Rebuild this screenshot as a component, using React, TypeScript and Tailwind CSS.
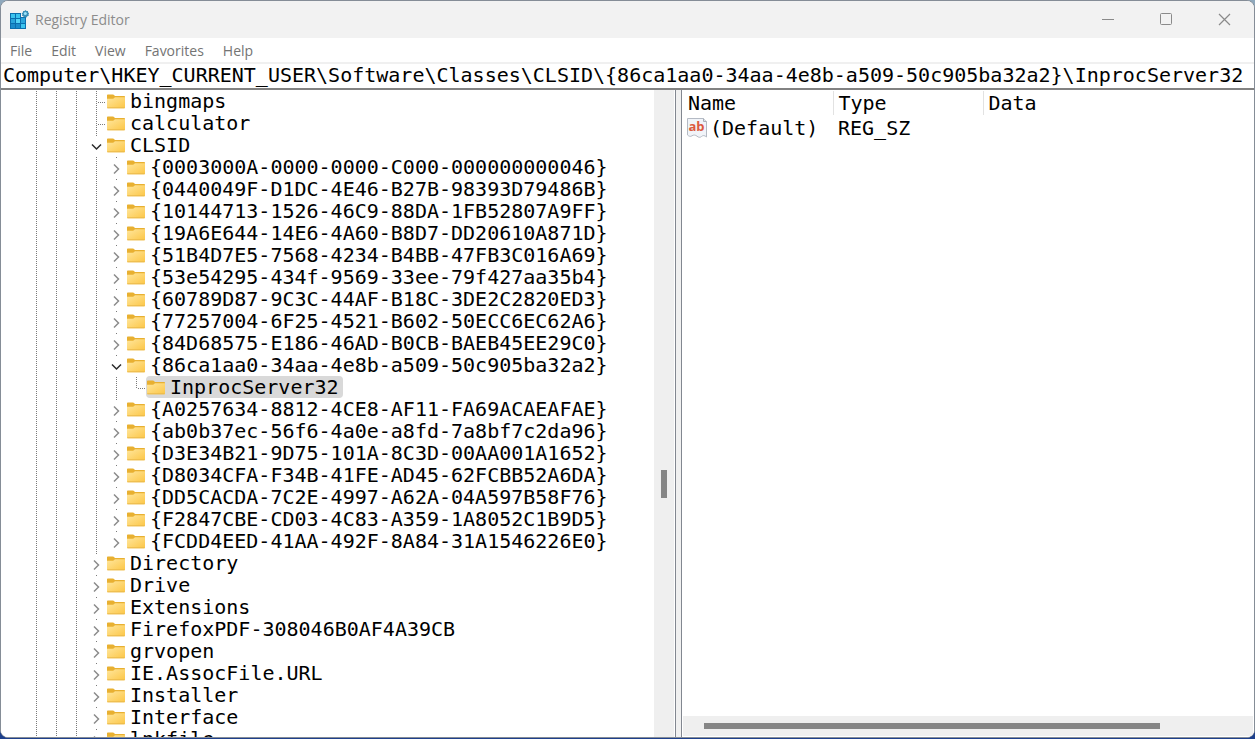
import { useState } from "react";

type Item = {
  name: string;
  depth: number;
  state: "leaf" | "closed" | "open";
  last?: boolean;
};

const clsid = (name: string): Item => ({ name, depth: 1, state: "closed" });
const top = (name: string): Item => ({ name, depth: 0, state: "closed" });

const items: Item[] = [
  { name: "bingmaps", depth: 0, state: "leaf" },
  { name: "calculator", depth: 0, state: "leaf" },
  { name: "CLSID", depth: 0, state: "open" },
  clsid("{0003000A-0000-0000-C000-000000000046}"),
  clsid("{0440049F-D1DC-4E46-B27B-98393D79486B}"),
  clsid("{10144713-1526-46C9-88DA-1FB52807A9FF}"),
  clsid("{19A6E644-14E6-4A60-B8D7-DD20610A871D}"),
  clsid("{51B4D7E5-7568-4234-B4BB-47FB3C016A69}"),
  clsid("{53e54295-434f-9569-33ee-79f427aa35b4}"),
  clsid("{60789D87-9C3C-44AF-B18C-3DE2C2820ED3}"),
  clsid("{77257004-6F25-4521-B602-50ECC6EC62A6}"),
  clsid("{84D68575-E186-46AD-B0CB-BAEB45EE29C0}"),
  { name: "{86ca1aa0-34aa-4e8b-a509-50c905ba32a2}", depth: 1, state: "open" },
  { name: "InprocServer32", depth: 2, state: "leaf", last: true },
  clsid("{A0257634-8812-4CE8-AF11-FA69ACAEAFAE}"),
  clsid("{ab0b37ec-56f6-4a0e-a8fd-7a8bf7c2da96}"),
  clsid("{D3E34B21-9D75-101A-8C3D-00AA001A1652}"),
  clsid("{D8034CFA-F34B-41FE-AD45-62FCBB52A6DA}"),
  clsid("{DD5CACDA-7C2E-4997-A62A-04A597B58F76}"),
  clsid("{F2847CBE-CD03-4C83-A359-1A8052C1B9D5}"),
  clsid("{FCDD4EED-41AA-492F-8A84-31A1546226E0}"),
  top("Directory"),
  top("Drive"),
  top("Extensions"),
  top("FirefoxPDF-308046B0AF4A39CB"),
  top("grvopen"),
  top("IE.AssocFile.URL"),
  top("Installer"),
  top("Interface"),
  top("lnkfile"),
];

const dotsDown = "w-px bg-[repeating-linear-gradient(180deg,transparent_0_1px,#7a7a7a_1px_2px)]";
const dotsAcross = "h-px bg-[repeating-linear-gradient(90deg,transparent_0_1px,#7a7a7a_1px_2px)]";

function RegistryIcon() {
  return (
    <svg width="20" height="20" viewBox="0 0 20 20" aria-hidden="true">
      <path d="M1 3h11v4h5v12H1z" fill="#0b6fae" />
      <path d="M2 4h4v4H2zM7 4h4v4H7z" fill="#3cc4ee" />
      <path d="M2 9h4v4H2z" fill="#2aa5dc" />
      <path d="M7 9h4v4H7z" fill="#53d3f5" />
      <path d="M12 8h4v5h-4z" fill="#2aa5dc" />
      <path d="M2 14h4v4H2zM7 14h4v4H7z" fill="#1b8ccb" />
      <path d="M12 14h4v4h-4z" fill="#3cc4ee" />
      <path
        d="M16.500 0l1 1.100 1.500-.2.1 1.500 1 .8-.6 1.200.3 1.400-1.500.4-.6 1.300-1.400-.6-1.400.6-.6-1.300-1.400-.4.5-1.400-.8-1.200 1.300-.8.2-1.500 1.400.2z"
        fill="#3a8fb8"
      />
      <circle cx="16.300" cy="3.600" r="1.500" fill="#9be3fa" />
    </svg>
  );
}

function FolderIcon() {
  return (
    <svg width="18" height="16" viewBox="0 0 18 16" className="shrink-0" aria-hidden="true">
      <defs>
        <linearGradient id="folderFront" x1="0" y1="0" x2="1" y2="1">
          <stop offset="0" stopColor="#ffe69c" />
          <stop offset="1" stopColor="#fcc646" />
        </linearGradient>
      </defs>
      <path d="M0 2.200Q0 1.400.8 1.400h5q.5 0 .9.400L8 3h9.200q.8 0 .8.800V9H0z" fill="#e8b031" />
      <path d="M0 5.800h6.200L8 4.200h10v10.300q0 .8-.8.8H.8q-.8 0-.8-.8z" fill="url(#folderFront)" />
      <path d="M.3 14.800h17.400" stroke="#e9b84a" strokeWidth="1" />
    </svg>
  );
}

function StringIcon() {
  return (
    <svg width="20" height="20" viewBox="0 0 20 20" className="shrink-0" aria-hidden="true">
      <path
        d="M.5.5h16l3 3V19c-2-1.800-3.500-1.800-5-.5s-3 1-4.500-.3-3.500-1.500-5-.4-3 .5-4.500-.8z"
        fill="#f1f4f9"
        stroke="#b4bac4"
      />
      <path d="M16.500.5v3h3" fill="#dfe3e8" stroke="#a9afb9" />
      <text
        x="9.500"
        y="13"
        textAnchor="middle"
        fill="#dc5a40"
        fontSize="13"
        fontWeight="700"
        fontFamily="'Open Sans', sans-serif"
      >
        ab
      </text>
    </svg>
  );
}

function Expander({ item }: { item: Item }) {
  if (item.state === "leaf") {
    return (
      <span className="flex h-full w-5 justify-end" aria-hidden="true">
        <span className={`${dotsDown} ${item.last ? "h-3" : "h-full"}`} />
        <span className={`${dotsAcross} mt-3 w-[9px]`} />
      </span>
    );
  }
  const open = item.state === "open";
  return (
    <span className="flex h-full w-5 flex-col items-center pl-px">
      <span className={`${dotsDown} h-[2px]`} />
      <button
        type="button"
        aria-label={`${open ? "Collapse" : "Expand"} ${item.name}`}
        className="flex w-5 flex-1 items-center justify-center pt-[2px]"
      >
        <svg width="12" height="12" viewBox="0 0 12 12" fill="none" aria-hidden="true">
          {open ? (
            <path d="M1 3.500L5.500 8 10 3.500" stroke="#2b2b2b" strokeWidth="1.500" />
          ) : (
            <path d="M3 1.500L7.500 6 3 10.500" stroke="#8c8c8c" strokeWidth="1.500" />
          )}
        </svg>
      </button>
    </span>
  );
}

function TreeRow({
  item,
  selected,
  onSelect,
}: {
  item: Item;
  selected: boolean;
  onSelect: () => void;
}) {
  const guides = Array.from({ length: 3 + item.depth });
  return (
    <li
      role="treeitem"
      aria-level={item.depth + 1}
      aria-selected={selected}
      className="flex h-[22px] shrink-0"
    >
      {guides.map((_, i) => (
        <span key={i} className="flex w-5 justify-center pl-px" aria-hidden="true">
          <span className={dotsDown} />
        </span>
      ))}
      <Expander item={item} />
      <button
        type="button"
        onClick={onSelect}
        className={`flex items-center gap-[5px] rounded-sm pr-1 pl-px whitespace-pre ${
          selected ? "bg-[#d9d9d9]" : ""
        }`}
      >
        <FolderIcon />
        {item.name}
      </button>
    </li>
  );
}

export default function App() {
  const [selected, setSelected] = useState("InprocServer32");
  const [path, setPath] = useState(
    "Computer\\HKEY_CURRENT_USER\\Software\\Classes\\CLSID\\{86ca1aa0-34aa-4e8b-a509-50c905ba32a2}\\InprocServer32",
  );

  return (
    <div className="h-screen overflow-hidden bg-linear-to-b from-[#8fa9bd] via-[#7b8794] to-[#1d3f8c] pb-px font-['Open_Sans',sans-serif]">
      <main className="flex h-full flex-col overflow-hidden rounded-lg border border-[#858d97] bg-white">
        <header className="flex h-[37px] shrink-0 items-center bg-[#f2f2f2] pl-2">
          <RegistryIcon />
          <h1 className="flex-1 pl-[6px] text-sm text-[#8c8c8c]">Registry Editor</h1>
          <button type="button" aria-label="Minimize" className="flex h-full w-[58px] items-center justify-center">
            <svg width="14" height="14" viewBox="0 0 14 14" stroke="#8a8a8a" aria-hidden="true">
              <path d="M0 6.500h12" />
            </svg>
          </button>
          <button type="button" aria-label="Maximize" className="flex h-full w-[58px] items-center justify-center">
            <svg width="14" height="14" viewBox="0 0 14 14" fill="none" stroke="#8a8a8a" aria-hidden="true">
              <rect x=".5" y=".5" width="11" height="11" rx="1" />
            </svg>
          </button>
          <button type="button" aria-label="Close" className="flex h-full w-[58px] items-center justify-center">
            <svg width="14" height="14" viewBox="0 0 14 14" stroke="#8a8a8a" strokeWidth="1.200" aria-hidden="true">
              <path d="M1 1l11 11M12 1L1 12" />
            </svg>
          </button>
        </header>

        <nav className="flex h-6 shrink-0 items-center gap-[19px] pt-[2px] pl-[9px] text-sm text-[#747474]">
          <button type="button">File</button>
          <button type="button">Edit</button>
          <button type="button">View</button>
          <button type="button">Favorites</button>
          <button type="button">Help</button>
        </nav>

        <input
          type="text"
          aria-label="Address"
          spellCheck={false}
          value={path}
          onChange={(e) => setPath(e.target.value)}
          className="h-7 w-full shrink-0 border-t-2 border-b-2 border-t-[#f0f0f0] border-b-[#828282] bg-white pb-[2px] pl-[2px] font-['DejaVu_Sans_Mono',monospace] text-[20px] leading-[22px] text-black outline-none"
        />

        <div className="flex min-h-0 flex-1 bg-[#f0f0f0] font-['DejaVu_Sans_Mono',monospace] text-[20px] leading-[22px] text-black">
          <section className="flex w-[675px] shrink-0 border-r border-[#828790] bg-white">
            <ul role="tree" aria-label="Registry keys" className="flex min-w-0 flex-1 flex-col overflow-hidden pl-[25px]">
              {items.map((item) => (
                <TreeRow
                  key={item.name}
                  item={item}
                  selected={item.name === selected}
                  onSelect={() => setSelected(item.name)}
                />
              ))}
            </ul>
            <div className="mr-px flex w-5 flex-col items-center bg-[#efefef]">
              <div className="grow-[380]" />
              <div className="h-7 w-[6px] bg-[#868686]" />
              <div className="grow-[239]" />
            </div>
          </section>

          <section className="ml-[5px] flex min-w-0 flex-1 flex-col border-l border-[#828790] bg-white pl-px">
            <div className="flex-1 overflow-hidden pt-px">
              <table className="w-full table-fixed border-collapse text-left">
                <colgroup>
                  <col className="w-[150px]" />
                  <col className="w-[150px]" />
                  <col />
                </colgroup>
                <thead>
                  <tr className="h-6">
                    <th className="border-r border-[#e2e2e2] p-0 pl-[5px] font-normal">Name</th>
                    <th className="border-r border-[#e2e2e2] p-0 pl-[5px] font-normal">Type</th>
                    <th className="p-0 pl-[5px] font-normal">Data</th>
                  </tr>
                </thead>
                <tbody>
                  <tr className="h-[26px]">
                    <td className="p-0 pl-1">
                      <div className="flex items-center gap-[3px] whitespace-nowrap">
                        <StringIcon />
                        (Default)
                      </div>
                    </td>
                    <td className="p-0 pl-[5px]">REG_SZ</td>
                    <td />
                  </tr>
                </tbody>
              </table>
            </div>
            <div className="mr-px mb-px flex h-5 shrink-0 items-center bg-[#efefef] pl-[21px]">
              <div className="h-[6px] w-[83%] bg-[#868686]" />
            </div>
          </section>
        </div>
      </main>
    </div>
  );
}
